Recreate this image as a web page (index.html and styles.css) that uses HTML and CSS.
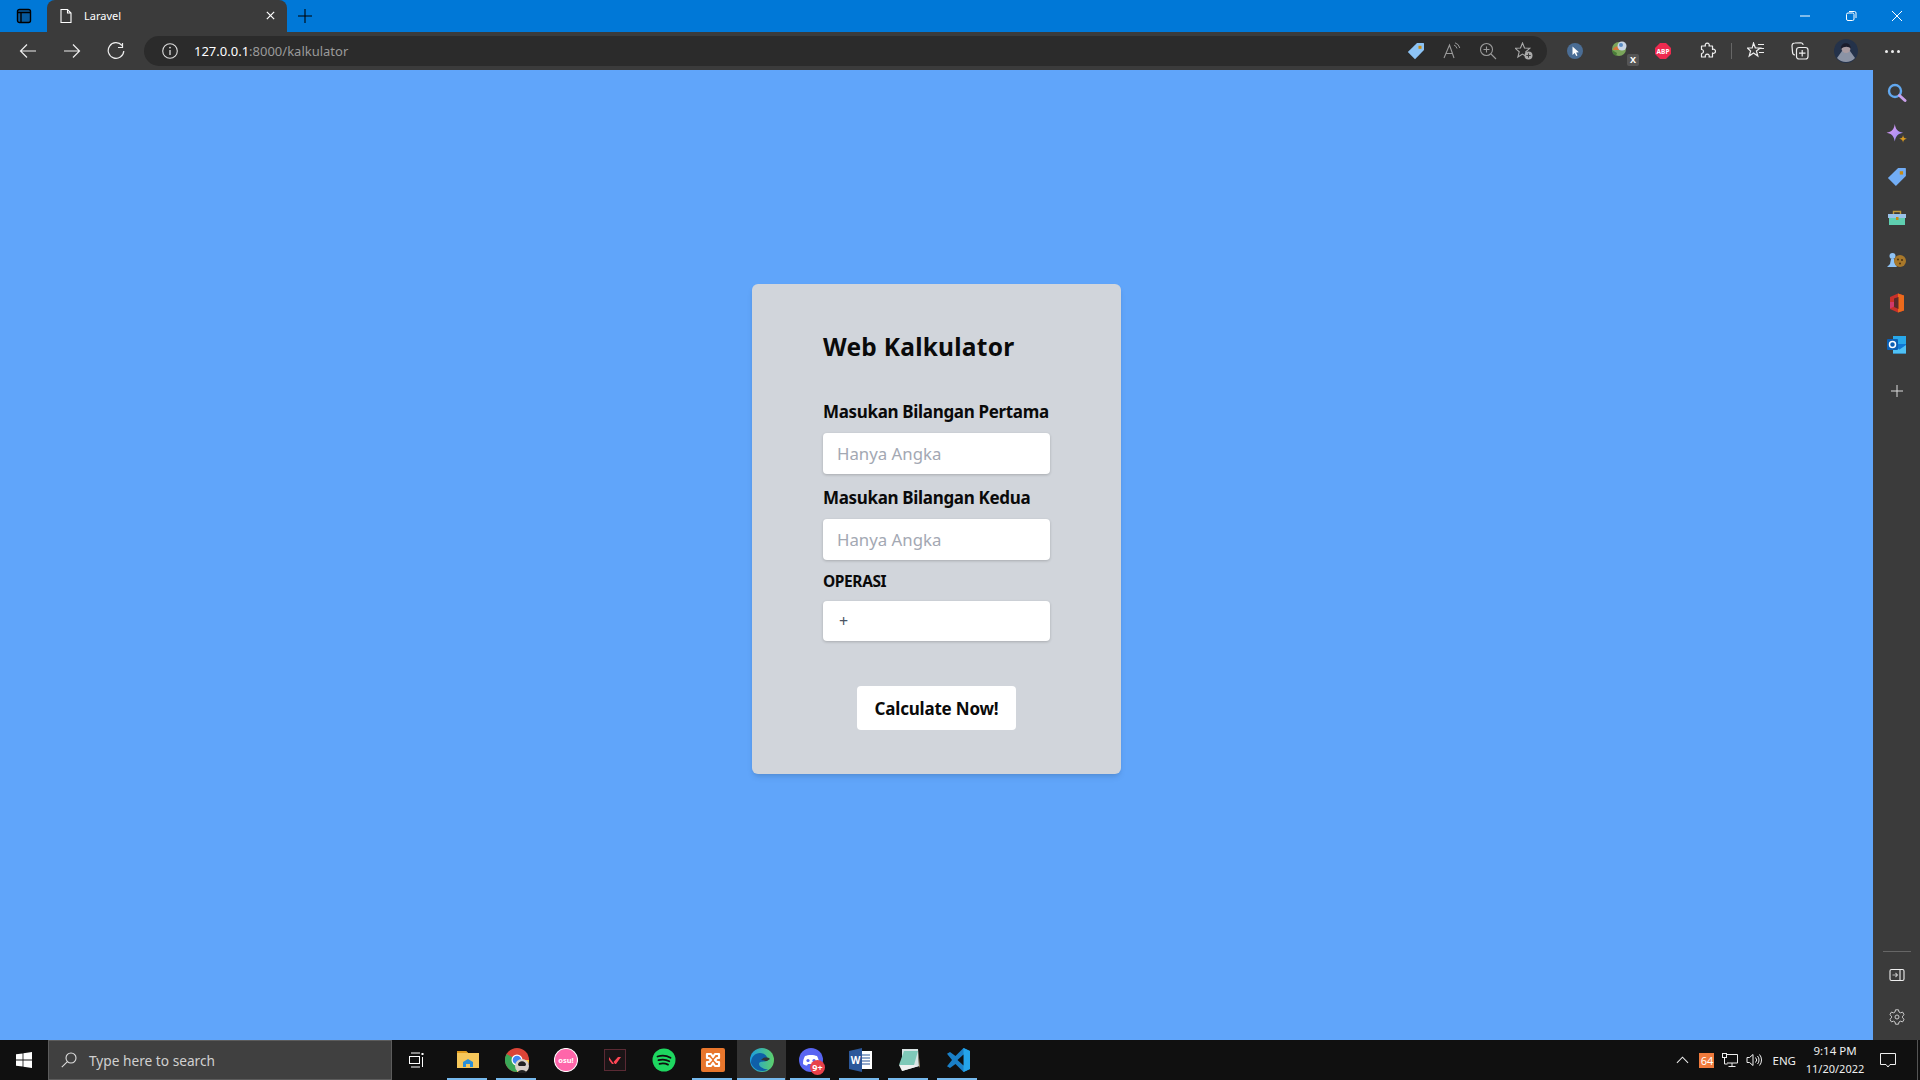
FILE: index.html
```html
<!DOCTYPE html>
<html lang="en">
<head>
<meta charset="utf-8">
<title>Laravel</title>
<link rel="stylesheet" href="styles.css">
</head>
<body>
<div class="window">
  <header class="titlebar">
    <div class="tab-actions">
      <svg class="ic16" viewBox="0 0 16 16"><rect x="1.500" y="1.500" width="13" height="13" rx="2" fill="#075a9e" stroke="#000" stroke-width="1.400"/><path d="M1.500 4.500h13M5 4.500v10" stroke="#000" stroke-width="1.400" fill="none"/></svg>
    </div>
    <div class="tab">
      <svg class="ic16" viewBox="0 0 16 16"><path d="M3 1.500h6.500l3.500 3.500v9.500H3z M9.500 1.500V5H13" fill="none" stroke="#fff" stroke-width="1.100"/></svg>
      <span class="tab-title">Laravel</span>
      <svg class="tab-close" viewBox="0 0 12 12"><path d="M2 2l8 8M10 2l-8 8" stroke="#fff" stroke-width="1.300"/></svg>
    </div>
    <svg class="new-tab" viewBox="0 0 16 16"><path d="M8 0v16M0 8h16" stroke="#000" stroke-width="1.200"/></svg>
    <div class="win-controls">
      <svg class="win-btn" viewBox="0 0 12 12"><path d="M1 6h10" stroke="#fff" stroke-width="1"/></svg>
      <svg class="win-btn" viewBox="0 0 12 12"><rect x="1.500" y="3" width="7.500" height="7.500" rx="1.500" fill="none" stroke="#fff"/><path d="M4 1.500h5.500a1.500 1.500 0 0 1 1.500 1.500V8" fill="none" stroke="#fff"/></svg>
      <svg class="win-btn" viewBox="0 0 12 12"><path d="M1 1l10 10M11 1L1 11" stroke="#fff" stroke-width="1"/></svg>
    </div>
  </header>

  <nav class="toolbar">
    <button class="tb-btn"><svg class="ic18" viewBox="0 0 18 18"><path d="M17 9H1.500M8 2.500L1.500 9 8 15.500" fill="none" stroke="#eee" stroke-width="1.200"/></svg></button>
    <button class="tb-btn"><svg class="ic18" viewBox="0 0 18 18"><path d="M1 9h15.500M10 2.500L16.500 9 10 15.500" fill="none" stroke="#eee" stroke-width="1.200"/></svg></button>
    <button class="tb-btn"><svg class="ic18" viewBox="0 0 18 18"><path d="M15 3.500A7.800 7.800 0 1 0 16.800 9" fill="none" stroke="#eee" stroke-width="1.200"/><path d="M11 5.500h4.500V1" fill="none" stroke="#eee" stroke-width="1.200"/></svg></button>
    <div class="omnibox">
      <svg class="ic16 info" viewBox="0 0 16 16"><circle cx="8" cy="8" r="7.300" fill="none" stroke="#ddd" stroke-width="1.100"/><path d="M8 7v5" stroke="#ddd" stroke-width="1.300"/><circle cx="8" cy="4.600" r=".9" fill="#ddd"/></svg>
      <span class="url"><span class="url-host">127.0.0.1</span>:8000/kalkulator</span>
      <div class="omni-icons">
        <svg class="ic18" viewBox="0 0 18 18"><path d="M10 1h6.500a.5.5 0 0 1 .5.5V8l-9 9.200L.8 10z" fill="#8cc3f5"/><rect x="11.500" y="3.800" width="3" height="3" fill="#c78a12"/></svg>
        <svg class="ic18" viewBox="0 0 18 18"><path d="M1 16L6.500 3 11 16M3 11.500h6.500" fill="none" stroke="#9a9a9a" stroke-width="1.100"/><path d="M11 3a5 5 0 0 1 3 3.500M12 .8A7 7 0 0 1 16.800 6" fill="none" stroke="#9a9a9a"/></svg>
        <svg class="ic18" viewBox="0 0 18 18"><circle cx="7.500" cy="7.500" r="6" fill="none" stroke="#9a9a9a" stroke-width="1.100"/><path d="M12 12l5 5M4.500 7.500h6M7.500 4.500v6" stroke="#9a9a9a" stroke-width="1.100"/></svg>
        <svg class="ic18" viewBox="0 0 18 18"><path d="M7.500 1l2 5 5.300.3-4 3.500 1.300 5.200-4.600-2.900-4.600 2.900 1.300-5.200-4-3.500 5.300-.3z" fill="none" stroke="#aaa" stroke-width="1.100"/><circle cx="13.500" cy="13.500" r="4" fill="#aaa"/><path d="M13.500 11.300v4.400M11.300 13.500h4.400" stroke="#3b3b3b" stroke-width="1"/></svg>
      </div>
    </div>
    <div class="ext-icons">
      <button class="ext-btn"><svg class="ic16" viewBox="0 0 16 16"><circle cx="8" cy="8" r="8" fill="#4a6d95"/><path d="M5.500 3.500v8.500l2.200-2 1.500 3 1.300-.6-1.400-2.900 2.800-.3z" fill="#fff"/></svg></button>
      <button class="ext-btn ext-idm"><svg class="ic22" viewBox="0 0 22 22"><circle cx="9" cy="9" r="7" fill="#7aa55a"/><path d="M3 10a6 4 0 0 1 11-2l-3 2z" fill="#d4763a"/><circle cx="12" cy="6" r="4.500" fill="#c9d6e6"/><circle cx="11" cy="5" r="2" fill="#5b8dc4"/><path d="M2 10l5 3-1 3-3-2z" fill="#4a7d38"/></svg><span class="ext-badge">X</span></button>
      <button class="ext-btn ext-abp"><svg class="ic16" viewBox="0 0 16 16"><path d="M5 0h6l5 5v6l-5 5H5l-5-5V5z" fill="#ee2a4f"/><text x="8" y="10.500" class="abp">ABP</text></svg></button>
      <button class="ext-btn"><svg class="ic18" viewBox="0 0 18 18"><path d="M7.500 4a2 2 0 1 1 3.500 0h3.500v3.500a2 2 0 1 1 0 3.500V15H11a2 2 0 1 0-3.500 0H3.500v-3.500a2 2 0 1 0 0-4V4z" fill="none" stroke="#eee" stroke-width="1.200" stroke-linejoin="round"/></svg></button>
      <span class="tb-divider"></span>
      <button class="ext-btn ext-gap"><svg class="ic18" viewBox="0 0 18 18"><path d="M6.500 1l1.800 4.800 5 .2-3.900 3 1.400 5-4.300-3-4.300 3 1.400-5L.2 6l5-.2z" fill="none" stroke="#eee" stroke-width="1.200"/><path d="M11 2.500h6M13 6.500h4M12 10.500h5" stroke="#eee" stroke-width="1.200"/></svg></button>
      <button class="ext-btn"><svg class="ic18" viewBox="0 0 18 18"><path d="M4 13c-2 0-2.500-2-2.500-3L1 4c0-2 1-3 3-3l6-.2c1 0 2 .7 2.200 2" fill="none" stroke="#eee" stroke-width="1.200"/><rect x="5.500" y="5.500" width="11.500" height="11.500" rx="2.500" fill="none" stroke="#eee" stroke-width="1.200"/><path d="M11.200 8v6.500M8 11.200h6.500" stroke="#eee" stroke-width="1.200"/></svg></button>
      <button class="ext-btn ext-gap"><svg class="ic24" viewBox="0 0 24 24"><circle cx="12" cy="12" r="12" fill="#24324a"/><path d="M3 19l5-7 8 0 5 7a12 12 0 0 1-18 0z" fill="#8b93a5"/><circle cx="12" cy="9.500" r="4.500" fill="#a89aa0"/><path d="M7 10c-1-7 10-8 10 0-2-3-7-3-10 0z" fill="#1a1c2c"/></svg></button>
      <button class="ext-btn ext-gap"><span class="dots"><i></i><i></i><i></i></span></button>
    </div>
  </nav>

  <div class="viewport">
    <main class="page">
      <form class="card">
        <h1 class="card-title">Web Kalkulator</h1>
        <label class="field-label first">Masukan Bilangan Pertama</label>
        <input class="field" type="text" placeholder="Hanya Angka">
        <label class="field-label second">Masukan Bilangan Kedua</label>
        <input class="field" type="text" placeholder="Hanya Angka">
        <label class="op-label">OPERASI</label>
        <div class="field select-box">+</div>
        <div class="actions"><button class="submit" type="button">Calculate Now!</button></div>
      </form>
    </main>
    <aside class="sidebar">
      <div class="side-btn"><svg class="ic20" viewBox="0 0 20 20"><circle cx="8" cy="8" r="6" fill="none" stroke="#62a8ef" stroke-width="2.400"/><path d="M12.500 12.500l5.500 5" stroke="#c9a0ea" stroke-width="3" stroke-linecap="round"/></svg></div>
      <div class="side-btn"><svg class="ic22" viewBox="0 0 20 20"><defs><linearGradient id="sp" x1="0" y1="0" x2="1" y2="1"><stop offset="0" stop-color="#e59af2"/><stop offset="1" stop-color="#8e8cf5"/></linearGradient></defs><path d="M8 0c.8 5 2.500 7 7.500 8-5 1-6.700 3-7.500 8-.8-5-2.500-7-7.500-8C5.500 7 7.200 5 8 0z" fill="url(#sp)"/><path d="M15.500 10c.3 2.300 1 3 3.500 3.500-2.500.5-3.200 1.200-3.500 3.500-.3-2.300-1-3-3.500-3.500 2.500-.5 3.200-1.200 3.500-3.500z" fill="#d99a1e"/></svg></div>
      <div class="side-btn"><svg class="ic20" viewBox="0 0 18 18"><path d="M10 1h6.500a.5.5 0 0 1 .5.500V8l-9 9.200L.8 10z" fill="#72adf5"/><rect x="11.500" y="3.800" width="3" height="3" fill="#c78a12"/></svg></div>
      <div class="side-btn"><svg class="ic20" viewBox="0 0 20 20"><path d="M6.500 5V2.500h7V5" fill="none" stroke="#c09a3a" stroke-width="1.400"/><rect x="1" y="5" width="18" height="4" fill="#9ac2e8"/><rect x="2" y="9" width="16" height="7" fill="#5fcfb0"/><rect x="9" y="8" width="2.500" height="3" fill="#c78a12"/></svg></div>
      <div class="side-btn"><svg class="ic20" viewBox="0 0 20 20"><circle cx="5.500" cy="5" r="3" fill="#8fc3f5"/><path d="M4 8h3l1 5 2 3H0l3-3z" fill="#8fc3f5"/><circle cx="13" cy="10" r="6" fill="#a8782a"/><circle cx="11" cy="8.500" r="1" fill="#4a3010"/><circle cx="15" cy="9" r="1" fill="#4a3010"/><circle cx="13" cy="12.500" r="1" fill="#4a3010"/></svg></div>
      <div class="side-btn"><svg class="ic20" viewBox="0 0 20 20"><path d="M11 .5l6 2v15l-6 2-8-3.500v-12z" fill="#c9302a"/><path d="M11 .5l6 2v15l-6 2z" fill="#eb6a1c"/><path d="M3 9h4v4.500L3 15.500z" fill="#d1396b"/><path d="M11.500 4L7 5.500v8.500l4.500 2z" fill="#5a2a2a"/></svg></div>
      <div class="side-btn"><svg class="ic20" viewBox="0 0 20 20"><rect x="6" y="1" width="13" height="9" fill="#28a8ea"/><path d="M6 9h13v9.500H6z" fill="#0f78d4"/><path d="M6 10l6.500 4.500L19 10v8.500H6z" fill="#4fc1f5"/><rect x="0" y="4" width="11" height="11" rx="1" fill="#0b5fb4"/><circle cx="5.500" cy="9.500" r="3" fill="none" stroke="#fff" stroke-width="1.500"/></svg></div>
      <div class="side-btn side-plus"><svg class="ic14" viewBox="0 0 14 14"><path d="M7 1v12M1 7h12" stroke="#ddd" stroke-width="1"/></svg></div>
      <div class="side-bottom">
        <span class="side-rule"></span>
        <div class="side-btn"><svg class="ic16" viewBox="0 0 16 16"><rect x="1" y="2.500" width="14" height="11" rx="1.500" fill="none" stroke="#eee" stroke-width="1.100"/><path d="M11 2.500v11" stroke="#eee" stroke-width="1.100"/><path d="M3.500 8h5M6.500 6l2 2-2 2" fill="none" stroke="#bbb" stroke-width="1.100"/></svg></div>
        <div class="side-btn"><svg class="ic16" viewBox="0 0 16 16"><path d="M6.500.8h3l.5 2.200 1.500.8 2.100-.7 1.500 2.600-1.600 1.500v1.600l1.600 1.500-1.500 2.600-2.100-.7-1.500.8-.5 2.200h-3L6 13l-1.500-.8-2.100.7L.9 10.300l1.600-1.500V7.200L.9 5.700l1.500-2.600 2.100.7L6 3z" fill="none" stroke="#ccc"/><circle cx="8" cy="8" r="2" fill="none" stroke="#ccc"/></svg></div>
      </div>
    </aside>
  </div>

  <footer class="taskbar">
    <div class="start"><svg class="ic16" viewBox="0 0 16 16"><path d="M0 2.300l6.600-.9v6.200H0zM7.400 1.300L16 0v7.600H7.400zM0 8.400h6.600v6.200L0 13.700zM7.400 8.400H16V16l-8.600-1.300z" fill="#fff"/></svg></div>
    <div class="search">
      <svg class="ic16 search-ic" viewBox="0 0 16 16"><circle cx="10" cy="6" r="5" fill="none" stroke="#ddd" stroke-width="1.100"/><path d="M6.400 9.600L.8 15.200" stroke="#ddd" stroke-width="1.100"/></svg>
      <span>Type here to search</span>
    </div>
    <div class="apps">
      <div class="app taskview"><svg class="ic16" viewBox="0 0 16 16"><path d="M3 1h9M3 15h9" stroke="#fff"/><rect x="1.500" y="4.500" width="10" height="7" fill="none" stroke="#fff"/><rect x="13.500" y="1" width="2" height="2" fill="#fff"/><path d="M14.500 5v10" stroke="#fff"/></svg></div>
      <div class="app on"><svg class="ic24" viewBox="0 0 24 24"><path d="M1 3h9l2 2h11v15H1z" fill="#f6c75a"/><path d="M1 3h9l2 2H1z" fill="#e09a1c"/><path d="M7 19v-5l5-3 5 3v5h-3v-3h-4v3z" fill="#2a8fd8"/></svg></div>
      <div class="app on"><svg class="ic24" viewBox="0 0 24 24"><circle cx="12" cy="12" r="12" fill="#db4437"/><path d="M12 12L1.600 6a12 12 0 0 0 10.400 18z" fill="#3aa757"/><path d="M12 12h12a12 12 0 0 1-12 12z" fill="#fcc934"/><circle cx="12" cy="12" r="5.500" fill="#fff"/><circle cx="12" cy="12" r="4.300" fill="#4285f4"/></svg><span class="chrome-badge"><svg class="ic14" viewBox="0 0 14 14"><circle cx="7" cy="7" r="7" fill="#d8d0c8"/><path d="M3 6c0-5 8-5 8 0l-1 1H4z" fill="#222"/><path d="M2.500 14c.5-4 8.500-4 9 0z" fill="#222"/></svg></span></div>
      <div class="app"><svg class="ic24" viewBox="0 0 24 24"><circle cx="12" cy="12" r="11.500" fill="#ff66aa" stroke="#fff" stroke-width="1.100"/><text x="12" y="14.800" class="osu">osu!</text></svg></div>
      <div class="app"><svg class="ic22" viewBox="0 0 22 22"><rect x=".5" y=".5" width="21" height="21" fill="#1a1416" stroke="#5a2a34"/><path d="M5 8l5 7H8L5 11zM17 8l-5 7h-1l-1.500-2L14 8z" fill="#ff4655"/></svg></div>
      <div class="app"><svg class="ic24" viewBox="0 0 24 24"><circle cx="12" cy="12" r="11.500" fill="#1ed760"/><path d="M5.500 8.500c4-1.200 9-1 13 1.200M6.500 12.200c3.500-1 7.500-.7 10.800 1M7.500 15.800c3-.8 6-.5 8.500.8" fill="none" stroke="#0f0f0f" stroke-width="1.800" stroke-linecap="round"/></svg></div>
      <div class="app on"><svg class="ic24" viewBox="0 0 24 24"><rect width="24" height="24" rx="2" fill="#e8762c"/><path d="M6 6h4l2 3 2-3h4v4h-2l-2 2 2 2h2v4h-4l-2-3-2 3H6v-4h2l2-2-2-2H6z" fill="none" stroke="#fff" stroke-width="2.200" stroke-linejoin="round"/></svg></div>
      <div class="app on active"><svg class="ic24" viewBox="0 0 24 24"><defs><linearGradient id="eg" x1="0" y1="0" x2="1" y2="0"><stop offset="0" stop-color="#1b9de2"/><stop offset="1" stop-color="#5ed06a"/></linearGradient></defs><circle cx="12" cy="12" r="12" fill="url(#eg)"/><path d="M1 15C1 7 8 3 14 6c3 1.500 4 5 3 7-3 1-8 0-8 3 0 3 5 5 9 5.500A12 12 0 0 1 1 15z" fill="#0f5fa8"/><path d="M17 13c-2 .5-3-1-6-1 2-3 7-3 9-1z" fill="#333"/></svg></div>
      <div class="app on"><svg class="ic24" viewBox="0 0 24 24"><circle cx="12" cy="12" r="12" fill="#5865f2"/><path d="M6 8c3-1.500 9-1.500 12 0 1.500 2.500 2 5 2 8-1.500 1-3 1.500-4 1.500l-1-1.500H9l-1 1.500C7 17.500 5.500 17 4 16c0-3 .5-5.500 2-8z" fill="#fff"/><circle cx="9" cy="12.500" r="1.600" fill="#5865f2"/><circle cx="15" cy="12.500" r="1.600" fill="#5865f2"/></svg><span class="discord-badge">9+</span></div>
      <div class="app on"><svg class="ic24" viewBox="0 0 24 24"><rect x="11" y="3" width="13" height="18" fill="#fff"/><path d="M14 7h8M14 10h8M14 13h8M14 16h8" stroke="#2b579a" stroke-width="1.200"/><path d="M1 3l13-3v24L1 21z" fill="#2b579a"/><text x="7.500" y="15.500" class="word">W</text></svg></div>
      <div class="app on"><svg class="ic24" viewBox="0 0 24 24"><path d="M5 1h16l1 17-17 5z" fill="#d8e4e4"/><path d="M2 17L7 3h14l-4 14z" fill="#7fc9b8"/><path d="M2 17l15 0 5 1-17 5z" fill="#f0f0f0"/><path d="M21 1l2 17-1 2z" fill="#8a7a5a"/></svg></div>
      <div class="app on"><svg class="ic24" viewBox="0 0 24 24"><path d="M17.500 0L24 3v18l-6.500 3-8-8L4 20l-3-1.800L6 12 1 5.800 4 4l5.500 4z" fill="#1a80c8"/><path d="M17.500 0L24 3v18l-6.500 3z" fill="#24a4ea"/><path d="M17.500 6.500L11.500 12l6 5.500z" fill="#101010"/></svg></div>
    </div>
    <div class="tray">
      <svg class="tray-ic chevron" viewBox="0 0 14 8"><path d="M1 7l6-6 6 6" fill="none" stroke="#eee" stroke-width="1.100"/></svg>
      <span class="temp">64</span>
      <svg class="tray-ic net" viewBox="0 0 16 14"><path d="M4 1.500h11.500v8.500H5M10 10v3M6.500 13.500h7" fill="none" stroke="#eee" stroke-width="1"/><rect x=".5" y=".5" width="4" height="4" fill="#101010" stroke="#eee"/><path d="M2.500 5v6h3" fill="none" stroke="#eee"/></svg>
      <svg class="tray-ic vol" viewBox="0 0 16 14"><path d="M1 4.500h2.500L7 1.500v11l-3.500-3H1z" fill="none" stroke="#eee"/><path d="M9.500 4.500a3.500 3.500 0 0 1 0 5M11.500 3a6 6 0 0 1 0 8M13.500 1.500a8.500 8.500 0 0 1 0 11" fill="none" stroke="#eee"/></svg>
      <span class="lang">ENG</span>
      <div class="clock"><span>9:14 PM</span><span class="clock-date">11/20/2022</span></div>
      <svg class="tray-ic notif" viewBox="0 0 16 16"><path d="M.5 1.500h15v11H10L8 15l-2-2.500H.5z" fill="none" stroke="#eee"/></svg>
      <span class="show-desktop"></span>
    </div>
  </footer>
</div>
</body>
</html>
```
FILE: styles.css
```css
* { box-sizing: border-box; }
html, body { margin: 0; height: 100%; overflow: hidden; }
body { font-family: "Noto Sans", "Open Sans", sans-serif; }
svg { display: block; flex: none; }
button { border: 0; background: none; padding: 0; font: inherit; }

.ic14 { width: 14px; height: 14px; }
.ic16 { width: 16px; height: 16px; }
.ic18 { width: 18px; height: 18px; }
.ic20 { width: 20px; height: 20px; }
.ic22 { width: 22px; height: 22px; }
.ic24 { width: 24px; height: 24px; }

.window { display: flex; flex-direction: column; width: 1920px; height: 1080px; }

/* title bar */
.titlebar { display: flex; align-items: flex-end; height: 32px; background: #0078d7; }
.tab-actions { display: flex; align-items: center; justify-content: center; width: 47px; height: 32px; }
.tab { display: flex; align-items: center; width: 240px; height: 32px; padding: 0 11px 1px 11px; background: #3b3b3b; border-radius: 8px 8px 0 0; }
.tab-title { margin-left: 10px; font-size: 11px; color: #fff; flex: 1; }
.tab-close { width: 11px; height: 11px; }
.new-tab { width: 14px; height: 14px; margin: 0 0 9px 11px; }
.win-controls { display: flex; align-items: center; gap: 34px; margin-left: auto; height: 32px; padding-right: 17px; }
.win-btn { width: 12px; height: 12px; }

/* toolbar */
.toolbar { display: flex; align-items: center; height: 38px; background: #3b3b3b; padding-left: 6px; }
.tb-btn { display: flex; align-items: center; justify-content: center; width: 44px; height: 30px; }
.omnibox { display: flex; align-items: center; width: 1403px; height: 30px; margin-left: 6px; padding: 0 14px 0 18px; background: #2b2b2b; border-radius: 15px; }
.info { margin-right: 16px; }
.url { font-size: 13px; color: #9a9a9a; }
.url-host { color: #fff; }
.omni-icons { display: flex; align-items: center; gap: 18px; margin-left: auto; }
.ext-icons { display: flex; align-items: center; margin-left: 6px; }
.ext-btn { position: relative; display: flex; align-items: center; justify-content: center; width: 44px; height: 30px; }
.ext-idm { margin-left: 2px; }
.ext-abp { margin-left: -2px; }
.ext-gap { margin-left: 2px; }
.ext-badge { position: absolute; right: 4px; bottom: 0; width: 12px; height: 12px; border-radius: 2px; background: #555; color: #fff; font-size: 9px; font-weight: 700; line-height: 12px; text-align: center; }
.abp { font-size: 6.500px; font-weight: 700; fill: #fff; text-anchor: middle; }
.tb-divider { width: 1px; height: 16px; background: #666; margin-left: 2px; }
.dots { display: flex; gap: 3px; }
.dots i { width: 3px; height: 3px; border-radius: 50%; background: #eee; }

/* page */
.viewport { display: flex; flex: 1; min-height: 0; }
.page { flex: 1; display: flex; justify-content: center; align-items: flex-start; padding-top: 214px; background: #60a5fa; }
.card { display: flex; flex-direction: column; width: 369px; height: 490px; padding: 0 71px; background: #d1d5db; border-radius: 6px; box-shadow: 0 4px 6px -1px rgba(0,0,0,.1), 0 2px 4px -2px rgba(0,0,0,.1); }
.card-title { margin: 46px 0 0; font-size: 24.500px; line-height: 34px; font-weight: 700; color: #0a0a0a; letter-spacing: .25px; white-space: nowrap; }
.field-label { font-size: 17px; line-height: 24px; font-weight: 700; color: #0a0a0a; letter-spacing: -.33px; white-space: nowrap; }
.first { margin-top: 36px; margin-bottom: 9px; }
.second { margin-top: 12px; margin-bottom: 9px; }
.op-label { margin-top: 10px; margin-bottom: 9px; font-size: 15.500px; line-height: 22px; font-weight: 700; color: #0a0a0a; letter-spacing: -.4px; }
.field { display: block; width: 227px; height: 41px; padding: 0 14px; border: 0; outline: 0; background: #fff; border-radius: 4px; box-shadow: 0 1px 3px rgba(0,0,0,.2); font-family: inherit; font-size: 16.800px; color: #4b5563; }
.field::placeholder { color: #a3a8b3; opacity: 1; }
.select-box { display: flex; align-items: center; height: 40px; padding-left: 16px; font-size: 16px; }
.actions { display: flex; justify-content: center; margin-top: 45px; }
.submit { width: 159px; height: 44px; background: #fff; border-radius: 4px; font-size: 17px; font-weight: 700; color: #0a0a0a; letter-spacing: -.2px; }

/* edge sidebar */
.sidebar { display: flex; flex-direction: column; width: 47px; padding: 2px 0; background: #3b3b3b; }
.side-btn { display: flex; align-items: center; justify-content: center; height: 42px; padding-left: 1px; }
.side-plus { margin-top: 4px; }
.side-bottom { display: flex; flex-direction: column; margin-top: auto; }
.side-rule { height: 1px; margin: 0 9px 2px 10px; background: #666; }

/* taskbar */
.taskbar { display: flex; align-items: stretch; height: 40px; background: #101010; }
.start { display: flex; align-items: center; justify-content: center; width: 48px; }
.search { display: flex; align-items: center; width: 344px; padding-left: 12px; background: #404040; border: 1px solid #5c5c5c; font-size: 13.700px; color: #d0d0d0; }
.search-ic { margin-right: 12px; }
.apps { display: flex; }
.app { position: relative; display: flex; align-items: center; justify-content: center; width: 49px; padding-bottom: 1px; }
.app.taskview { width: 48px; margin-right: 3px; }
.app.on::after { content: ""; position: absolute; left: 4px; right: 5px; bottom: 0; height: 2px; background: #76b9ed; }
.app.active { background: #333; }
.app.active::after { left: 0; right: 1px; }
.chrome-badge { position: absolute; left: 23px; top: 19px; }
.discord-badge { position: absolute; left: 24px; top: 20px; width: 15px; height: 15px; border-radius: 50%; background: #e8404a; color: #fff; font-size: 9px; font-weight: 700; line-height: 15px; text-align: center; }
.osu { font-size: 7.500px; font-weight: 700; fill: #fff; text-anchor: middle; }
.word { font-size: 10px; font-weight: 700; fill: #fff; text-anchor: middle; }
.tray { display: flex; align-items: center; margin-left: auto; color: #eee; }
.tray-ic { height: 14px; width: 16px; }
.chevron { width: 13px; height: 8px; }
.temp { width: 15px; height: 15px; margin-left: 10px; background: #ef7a3c; color: #fff; font-size: 11px; line-height: 15px; text-align: center; }
.net { margin-left: 8px; }
.vol { margin-left: 8px; }
.lang { margin-left: 10px; font-size: 11.500px; }
.clock { display: flex; flex-direction: column; align-items: center; width: 68px; margin-left: 5px; font-size: 11.500px; line-height: 18px; }
.clock-date { font-size: 11px; }
.notif { width: 16px; height: 16px; margin-left: 11px; }
.show-desktop { width: 1px; height: 40px; margin-left: 21px; margin-right: 2px; background: #555; }
```
